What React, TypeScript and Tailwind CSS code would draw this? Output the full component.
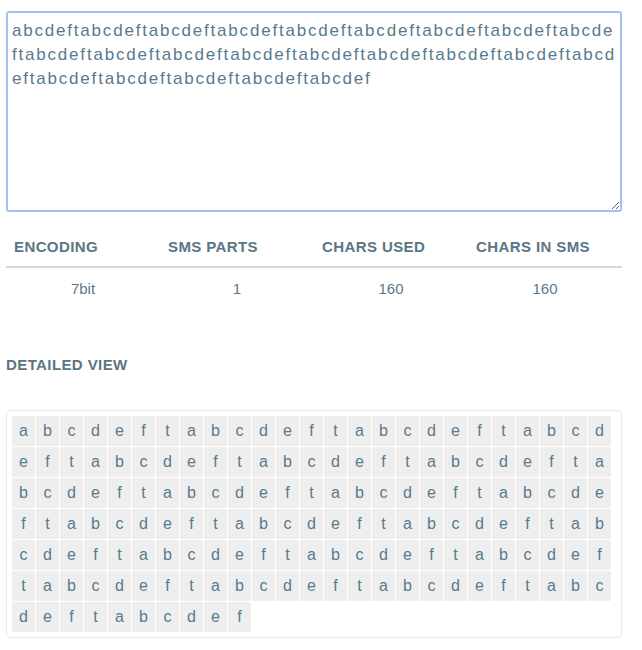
import { useState } from "react";

const SAMPLE = "abcdeft".repeat(23).slice(0, 160);

const stats = [
  { label: "Encoding", value: "7bit" },
  { label: "SMS Parts", value: "1" },
  { label: "Chars Used", value: "160" },
  { label: "Chars in SMS", value: "160" },
];

export default function App() {
  const [text, setText] = useState(SAMPLE);
  const chars = text.split("");

  return (
    <div
      className="min-h-screen bg-white pl-[6px] pt-[11px] text-[#587a8e]"
      style={{ fontFamily: '"Liberation Sans", Arial, sans-serif' }}
    >
      <div className="w-[616px]">
        <textarea
          autoFocus
          value={text}
          onChange={(e) => setText(e.target.value)}
          className="block h-[201px] w-full rounded-[3px] border-2 border-[#a4c1f6] pb-[6px] pl-[4px] pr-[2px] pt-[6px] text-[17px] leading-[24px] tracking-[1.8px] text-[#587a8e] outline-none"
          style={{ fontFamily: '"Liberation Sans", Arial, sans-serif' }}
        />

        <table className="mt-[17px] w-full table-fixed border-collapse">
          <thead>
            <tr className="border-b-2 border-[#d3dadd]">
              {stats.map((s) => (
                <th
                  key={s.label}
                  className="h-[38px] px-2 text-left align-middle text-[15px] font-bold uppercase tracking-[0.4px] text-[#5b7584]"
                >
                  {s.label}
                </th>
              ))}
            </tr>
          </thead>
          <tbody>
            <tr>
              {stats.map((s) => (
                <td key={s.label} className="h-[43px] text-center align-middle text-[15px]">
                  {s.value}
                </td>
              ))}
            </tr>
          </tbody>
        </table>

        <h3 className="mt-[46px] text-[15px] font-bold uppercase leading-[18px] tracking-[0.4px] text-[#5b7584]">
          Detailed view
        </h3>

        <div className="mt-[36px] flex flex-wrap gap-px rounded-[5px] border border-[#ebebeb] p-[5px]">
          {chars.map((c, i) => (
            <div
              key={i}
              className="flex h-[30px] w-[23px] items-center justify-center rounded-[2px] bg-[#eeeeee] text-[16px]"
            >
              {c}
            </div>
          ))}
        </div>
      </div>
    </div>
  );
}
